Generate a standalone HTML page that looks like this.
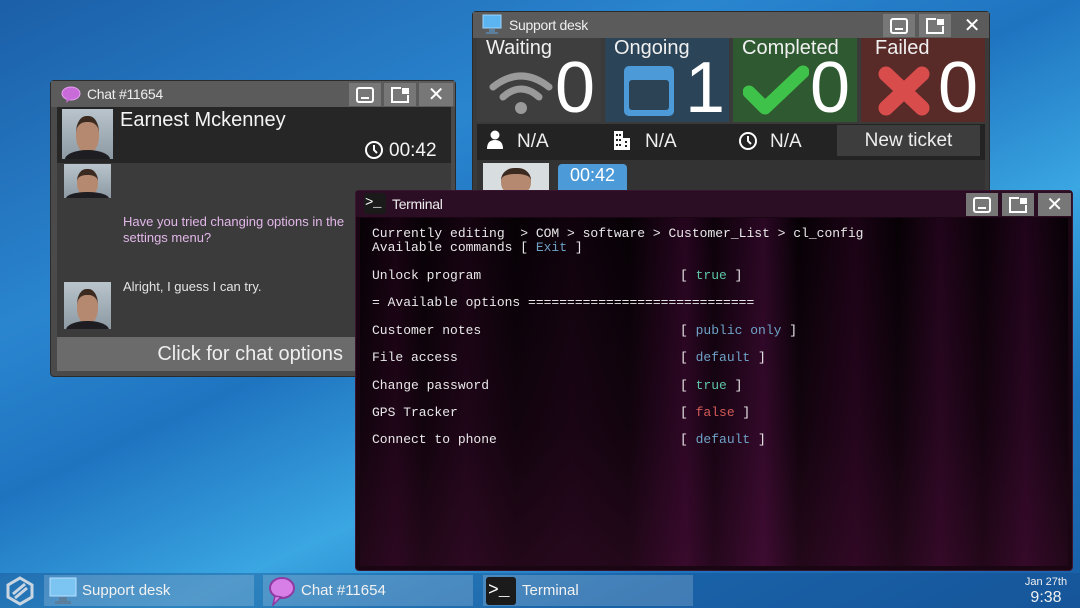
<!DOCTYPE html>
<html><head><meta charset="utf-8"><style>
*{margin:0;padding:0;box-sizing:border-box}
body{width:1080px;height:608px;overflow:hidden;position:relative;font-family:"Liberation Sans",sans-serif;
background:linear-gradient(155deg,#1b5fa8 0%,#2a85cf 30%,#1f74c0 45%,#3aa6e2 62%,#1d72bd 80%,#185ea6 100%);}
.abs{position:absolute}
.win{position:absolute;border-radius:4px}
.tb{position:absolute;left:0;right:0;top:0;height:26px;color:#eee;font-size:14px;letter-spacing:-0.3px}
.btn{position:absolute;top:2px;width:32px;height:23px;background:#777;display:flex;align-items:center;justify-content:center}
.av{position:absolute;background:linear-gradient(#b9c4cc,#8d9aa3);overflow:hidden}
.av:before{content:"";position:absolute;left:28%;top:14%;width:44%;height:62%;border-radius:45%;background:#b58870;border-top:6px solid #3b2a20}
.av:after{content:"";position:absolute;left:5%;bottom:-20%;width:90%;height:38%;border-radius:50% 50% 0 0;background:#1d1d22}
.mono{font-family:"Liberation Mono",monospace;font-size:13px;color:#e8e8e8;position:absolute;left:372px;white-space:pre}
.t{color:#5ec4a6}.b{color:#6fa2c8}.r{color:#d45a5a}.g{color:#aaa}
.task{position:absolute;top:575px;height:31px;background:rgba(255,255,255,0.18);color:#f2f2f2;font-size:15px;display:flex;align-items:center}
</style></head><body>

<!-- Chat window -->
<div class="win" style="left:50px;top:80px;width:406px;height:297px;background:#4a4a4a;border:1px solid #2b2b2b">
 <div class="tb" style="background:#5b5b5b">
  <svg class="abs" style="left:10px;top:5px" width="20" height="17"><ellipse cx="10" cy="7.5" rx="9" ry="6.5" fill="#c86ad8" stroke="#e7a0f0"/><path d="M6 13 L5 17 L10 13z" fill="#c86ad8"/></svg>
  <span class="abs" style="left:36px;top:5px">Chat #11654</span>
  <div class="btn" style="left:298px"><svg width="18" height="16"><rect x="1" y="1" width="16" height="14" rx="2" fill="none" stroke="#fff" stroke-width="2"/><rect x="5" y="10" width="8" height="2" fill="#fff"/></svg></div>
  <div class="btn" style="left:333px"><svg width="20" height="16"><path d="M11 1H2v14h16V8" fill="none" stroke="#fff" stroke-width="2"/><rect x="12" y="1" width="7" height="6" fill="#fff"/></svg></div>
  <div class="btn" style="left:368px;width:34px;font-size:20px;color:#fff">✕</div>
 </div>
 <div class="abs" style="left:6px;top:26px;width:394px;height:56px;background:#262626"></div>
 <div class="av" style="left:11px;top:28px;width:51px;height:50px"></div>
 <div class="abs" style="left:69px;top:28px;font-size:20px;color:#f4f4f4">Earnest Mckenney</div>
 <svg class="abs" style="left:313px;top:59px" width="20" height="20"><circle cx="10" cy="10" r="8" fill="none" stroke="#fff" stroke-width="2"/><path d="M10 5v5l3 3" stroke="#fff" stroke-width="2" fill="none"/></svg>
 <div class="abs" style="left:338px;top:59px;font-size:19px;color:#f4f4f4">00:42</div>
 <div class="abs" style="left:6px;top:82px;width:394px;height:174px;background:#3b3b3b"></div>
 <div class="av" style="left:13px;top:83px;width:47px;height:34px"></div>
 <div class="abs" style="left:72px;top:133px;font-size:13px;color:#e3b7ea;line-height:16px">Have you tried changing options in the<br>settings menu?</div>
 <div class="av" style="left:13px;top:201px;width:47px;height:47px"></div>
 <div class="abs" style="left:72px;top:198px;font-size:13px;color:#e4e4e4">Alright, I guess I can try.</div>
 <div class="abs" style="left:6px;top:256px;width:394px;height:34px;background:#6b6b6b;color:#eee;font-size:20px;text-align:right;padding-right:108px;line-height:34px">Click for chat options</div>
</div>

<!-- Support desk -->
<div class="win" style="left:472px;top:11px;width:518px;height:185px;background:#3a3a3a;border:1px solid #2b2b2b">
 <div class="tb" style="background:#5b5b5b">
  <svg class="abs" style="left:8px;top:2px" width="22" height="22"><rect x="2" y="1" width="18" height="13" fill="#5cb4f0" stroke="#9ad3ff"/><rect x="8" y="15" width="6" height="3" fill="#5a7e9c"/><rect x="5" y="18" width="12" height="2" fill="#5a7e9c"/></svg>
  <span class="abs" style="left:36px;top:5px">Support desk</span>
  <div class="btn" style="left:410px"><svg width="18" height="16"><rect x="1" y="1" width="16" height="14" rx="2" fill="none" stroke="#fff" stroke-width="2"/><rect x="5" y="10" width="8" height="2" fill="#fff"/></svg></div>
  <div class="btn" style="left:446px"><svg width="20" height="16"><path d="M11 1H2v14h16V8" fill="none" stroke="#fff" stroke-width="2"/><rect x="12" y="1" width="7" height="6" fill="#fff"/></svg></div>
  <div class="btn" style="left:482px;width:34px;font-size:20px;color:#fff;background:#5b5b5b">✕</div>
 </div>
 <div class="abs" style="left:4px;top:26px;width:124px;height:84px;background:#3e3e3e"></div>
 <div class="abs" style="left:132px;top:26px;width:124px;height:84px;background:#2b4457"></div>
 <div class="abs" style="left:260px;top:26px;width:124px;height:84px;background:#2f5a31"></div>
 <div class="abs" style="left:388px;top:26px;width:124px;height:84px;background:#582a28"></div>
 <div class="abs" style="left:13px;top:25px;font-size:20px;color:#f0f0f0">Waiting</div>
 <div class="abs" style="left:141px;top:25px;font-size:20px;color:#f0f0f0">Ongoing</div>
 <div class="abs" style="left:269px;top:25px;font-size:20px;color:#f0f0f0">Completed</div>
 <div class="abs" style="left:402px;top:25px;font-size:20px;color:#f0f0f0">Failed</div>
 <svg class="abs" style="left:16px;top:55px" width="64" height="48"><path d="M4 20 Q32 -2 60 20" stroke="#9a9a9a" stroke-width="7" fill="none" stroke-linecap="round"/><path d="M14 30 Q32 14 50 30" stroke="#9a9a9a" stroke-width="7" fill="none" stroke-linecap="round"/><circle cx="32" cy="41" r="6" fill="#9a9a9a"/></svg>
 <div class="abs" style="left:82px;top:36px;font-size:72px;color:#fff;line-height:80px">0</div>
 <svg class="abs" style="left:149px;top:52px" width="54" height="54"><rect x="2" y="2" width="50" height="50" rx="5" fill="#4c9ad8"/><rect x="7" y="16" width="40" height="30" rx="3" fill="#2c4356"/></svg>
 <div class="abs" style="left:212px;top:36px;font-size:72px;color:#fff;line-height:80px">1</div>
 <svg class="abs" style="left:270px;top:52px" width="66" height="52"><path d="M6 28 L22 44 L60 8" stroke="#3fc24a" stroke-width="13" fill="none" stroke-linejoin="round" stroke-linecap="round"/></svg>
 <div class="abs" style="left:337px;top:36px;font-size:72px;color:#fff;line-height:80px">0</div>
 <svg class="abs" style="left:405px;top:54px" width="52" height="50"><path d="M8 8 L44 42 M44 8 L8 42" stroke="#d94c4c" stroke-width="15" stroke-linecap="round"/></svg>
 <div class="abs" style="left:465px;top:36px;font-size:72px;color:#fff;line-height:80px">0</div>
 <div class="abs" style="left:4px;top:112px;width:508px;height:36px;background:#232323"></div>
 <svg class="abs" style="left:13px;top:118px" width="18" height="20"><circle cx="9" cy="5" r="4.5" fill="#fff"/><path d="M1 19 Q1 10 9 10 Q17 10 17 19z" fill="#fff"/></svg>
 <div class="abs" style="left:44px;top:119px;font-size:19px;color:#eee">N/A</div>
 <svg class="abs" style="left:140px;top:119px" width="18" height="19"><rect x="1" y="0" width="9" height="19" fill="#fff"/><rect x="10" y="7" width="7" height="12" fill="#fff"/><g fill="#232323"><rect x="3" y="3" width="2" height="2"/><rect x="6" y="3" width="2" height="2"/><rect x="3" y="8" width="2" height="2"/><rect x="6" y="8" width="2" height="2"/><rect x="3" y="13" width="2" height="2"/><rect x="6" y="13" width="2" height="2"/><rect x="12" y="10" width="2" height="2"/><rect x="12" y="14" width="2" height="2"/></g></svg>
 <div class="abs" style="left:172px;top:119px;font-size:19px;color:#eee">N/A</div>
 <svg class="abs" style="left:265px;top:119px" width="20" height="20"><circle cx="10" cy="10" r="8" fill="none" stroke="#fff" stroke-width="2"/><path d="M10 5v5l3 3" stroke="#fff" stroke-width="2" fill="none"/></svg>
 <div class="abs" style="left:297px;top:119px;font-size:19px;color:#eee">N/A</div>
 <div class="abs" style="left:364px;top:113px;width:143px;height:31px;background:#3d3d3d;color:#eee;font-size:19px;text-align:center;line-height:31px">New ticket</div>
 <div class="abs" style="left:4px;top:148px;width:508px;height:34px;background:#333"></div>
 <div class="av" style="left:10px;top:151px;width:66px;height:34px;background:#d8dde0"></div>
 <div class="abs" style="left:85px;top:152px;width:69px;height:32px;background:#4c9ad8;border-radius:4px;color:#fff;font-size:18px;text-align:center;line-height:22px">00:42</div>
</div>

<!-- Terminal -->
<div class="win" style="left:355px;top:190px;width:718px;height:381px;background:#1a0613;border:1px solid #3a1530">
 <div class="tb" style="background:#2c0e24">
  <div class="abs" style="left:8px;top:2px;width:22px;height:21px;background:#1a1a1a;border-radius:3px;color:#fff;font-size:14px;font-family:'Liberation Mono',monospace;line-height:21px;padding-left:1px">&gt;_</div>
  <span class="abs" style="left:36px;top:5px">Terminal</span>
  <div class="btn" style="left:610px"><svg width="18" height="16"><rect x="1" y="1" width="16" height="14" rx="2" fill="none" stroke="#fff" stroke-width="2"/><rect x="5" y="10" width="8" height="2" fill="#fff"/></svg></div>
  <div class="btn" style="left:646px"><svg width="20" height="16"><path d="M11 1H2v14h16V8" fill="none" stroke="#fff" stroke-width="2"/><rect x="12" y="1" width="7" height="6" fill="#fff"/></svg></div>
  <div class="btn" style="left:682px;width:33px;font-size:20px;color:#fff">✕</div>
 </div>
 <div class="abs" style="left:4px;top:27px;width:708px;height:348px;background:
  linear-gradient(90deg,rgba(0,0,0,0) 0%,rgba(80,10,60,.22) 5%,rgba(0,0,0,0) 9%,rgba(90,15,70,.18) 15%,rgba(0,0,0,0) 22%,rgba(60,10,50,.18) 30%,rgba(0,0,0,0) 38%,rgba(110,15,90,.3) 46%,rgba(60,5,50,.12) 50%,rgba(120,20,100,.32) 57%,rgba(0,0,0,0) 62%,rgba(90,10,70,.25) 70%,rgba(0,0,0,0) 76%,rgba(100,15,80,.28) 82%,rgba(40,5,30,.12) 88%,rgba(110,15,90,.25) 94%,rgba(0,0,0,0) 100%),
  linear-gradient(#060105,#12040e 60%,#220819)"></div>
</div>
<div class="mono" style="top:227px;line-height:14px">Currently editing  &gt; COM &gt; software &gt; Customer_List &gt; cl_config
Available commands [ <span class="b">Exit</span> ]</div>
<div class="mono" style="top:268px">Unlock program</div><div class="mono" style="left:680px;top:268px">[ <span class="t">true</span> ]</div>
<div class="mono" style="top:295px">= Available options =============================</div>
<div class="mono" style="top:323px">Customer notes</div><div class="mono" style="left:680px;top:323px">[ <span class="b">public only</span> ]</div>
<div class="mono" style="top:350px">File access</div><div class="mono" style="left:680px;top:350px">[ <span class="b">default</span> ]</div>
<div class="mono" style="top:378px">Change password</div><div class="mono" style="left:680px;top:378px">[ <span class="t">true</span> ]</div>
<div class="mono" style="top:405px">GPS Tracker</div><div class="mono" style="left:680px;top:405px">[ <span class="r">false</span> ]</div>
<div class="mono" style="top:432px">Connect to phone</div><div class="mono" style="left:680px;top:432px">[ <span class="b">default</span> ]</div>

<!-- Taskbar -->
<div class="abs" style="left:0;top:573px;width:1080px;height:35px;background:rgba(20,70,130,0.35)"></div>
<svg class="abs" style="left:5px;top:576px" width="30" height="30"><path d="M15 2 L27 9 V21 L15 28 L3 21 V9z" fill="none" stroke="#c9d6e2" stroke-width="3"/><path d="M8 18 L20 8 M10 22 L22 12" stroke="#c9d6e2" stroke-width="3"/></svg>
<div class="task" style="left:44px;width:210px">
 <svg style="margin-left:4px" width="30" height="30"><rect x="2" y="2" width="26" height="18" fill="#7cc4f2" stroke="#b6e0ff"/><rect x="11" y="21" width="8" height="4" fill="#5a7e9c"/><rect x="7" y="25" width="16" height="3" fill="#5a7e9c"/></svg>
 <span style="margin-left:4px">Support desk</span></div>
<div class="task" style="left:263px;width:210px">
 <svg style="margin-left:4px" width="30" height="30"><ellipse cx="15" cy="12" rx="12" ry="10" fill="#d77fe6" stroke="#8e3aa0" stroke-width="2"/><path d="M8 20 L6 29 L14 21z" fill="#d77fe6" stroke="#8e3aa0" stroke-width="1.5"/></svg>
 <span style="margin-left:4px">Chat #11654</span></div>
<div class="task" style="left:483px;width:210px">
 <div style="margin-left:3px;width:30px;height:28px;background:#1b1b1b;border-radius:3px;color:#fff;font-family:'Liberation Mono',monospace;font-size:18px;line-height:28px;padding-left:2px">&gt;_</div>
 <span style="margin-left:6px">Terminal</span></div>
<div class="abs" style="left:1020px;top:576px;width:52px;text-align:center;color:#f0f0f0;font-size:11px">Jan 27th</div>
<div class="abs" style="left:1020px;top:589px;width:52px;text-align:center;color:#f0f0f0;font-size:16px">9:38</div>
</body></html>
